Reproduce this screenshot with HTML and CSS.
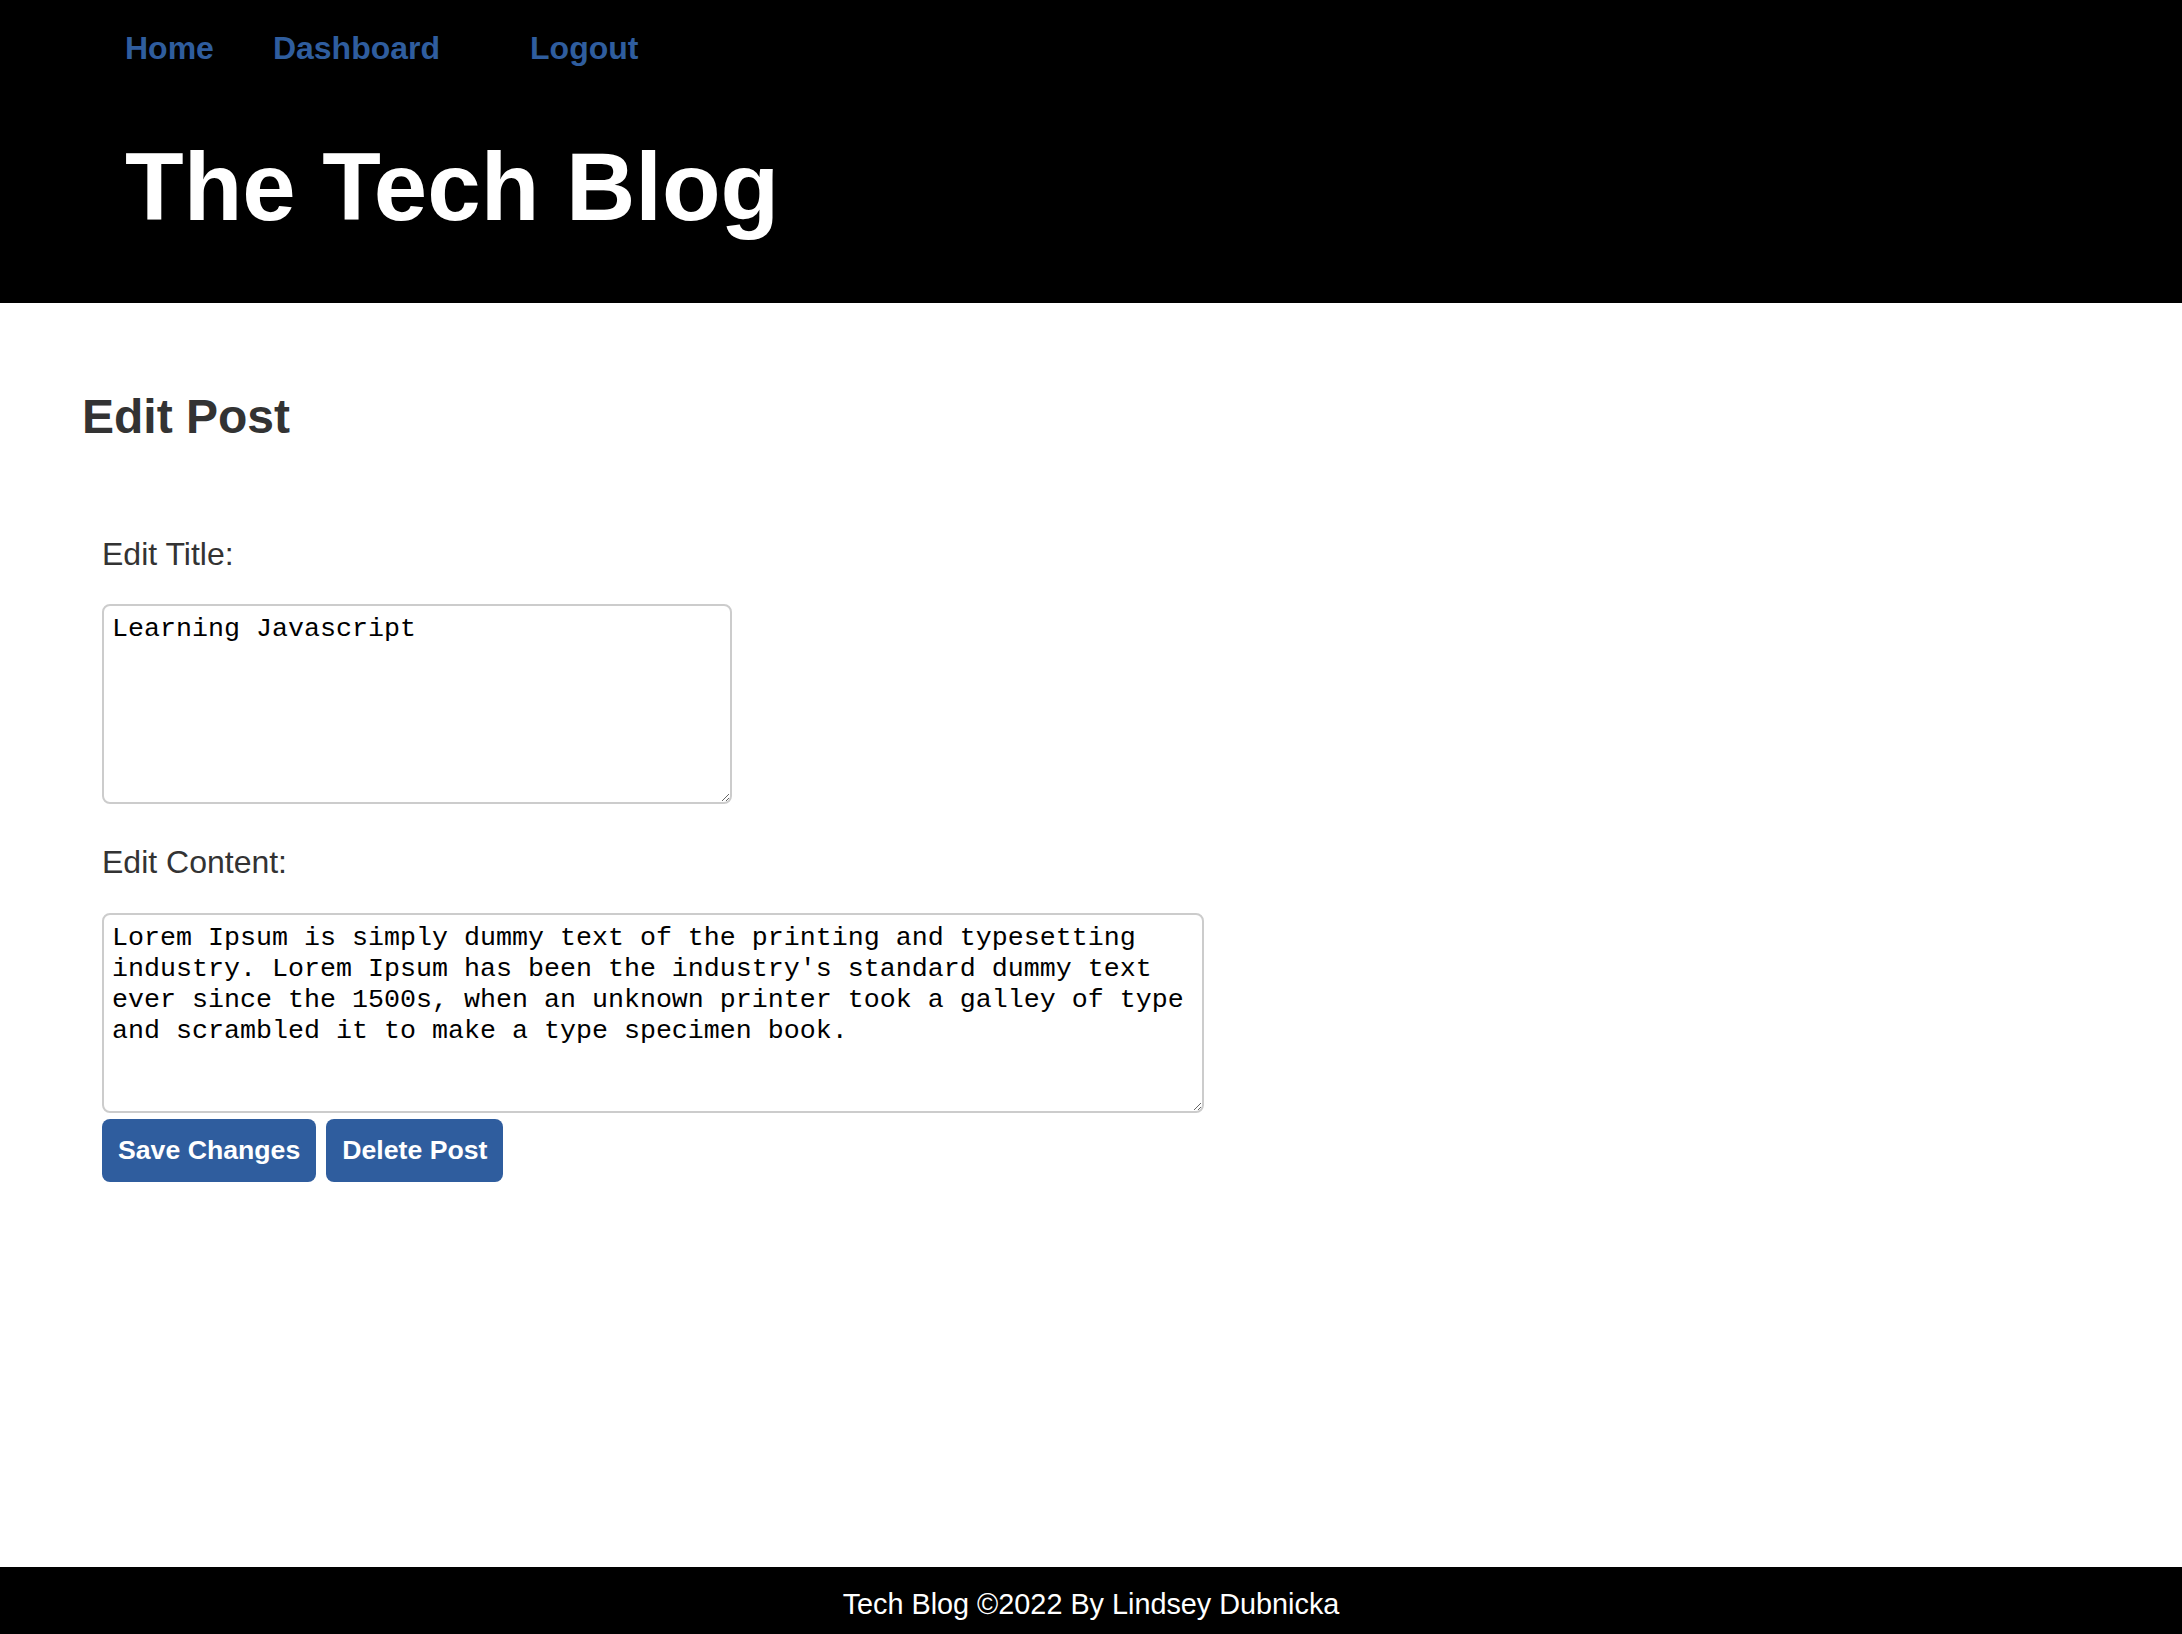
FILE: index.html
```html
<!DOCTYPE html>
<html lang="en">
<head>
<meta charset="utf-8">
<title>The Tech Blog</title>
<link rel="stylesheet" href="styles.css">
</head>
<body>
<header class="site-header">
  <nav class="nav">
    <a class="nav-link nav-home" href="#">Home</a>
    <a class="nav-link nav-dashboard" href="#">Dashboard</a>
    <a class="nav-link" href="#">Logout</a>
  </nav>
  <h1 class="site-title">The Tech Blog</h1>
</header>
<main class="content">
  <h2 class="page-title">Edit Post</h2>
  <form class="edit-form">
    <label class="field-label" for="post-title">Edit Title:</label>
    <textarea class="field title-field" id="post-title">Learning Javascript</textarea>
    <label class="field-label label-content" for="post-content">Edit Content:</label>
    <textarea class="field content-field" id="post-content">Lorem Ipsum is simply dummy text of the printing and typesetting industry. Lorem Ipsum has been the industry's standard dummy text ever since the 1500s, when an unknown printer took a galley of type and scrambled it to make a type specimen book.</textarea>
    <div class="actions">
      <button class="btn" type="button">Save Changes</button>
      <button class="btn" type="button">Delete Post</button>
    </div>
  </form>
</main>
<footer class="site-footer">Tech Blog ©2022 By Lindsey Dubnicka</footer>
</body>
</html>
```
FILE: styles.css
```css
html, body {
  margin: 0;
  padding: 0;
}

body {
  display: flex;
  flex-direction: column;
  min-height: 100vh;
  font-family: "Liberation Sans", Arial, Helvetica, sans-serif;
  background: #fff;
  color: #333;
}

.site-header {
  background: #000;
  padding: 29.5px 0 61.5px 125px;
}

.nav {
  display: flex;
  height: 37px;
  margin-bottom: 65px;
  font-size: 32px;
  line-height: 37px;
  font-weight: bold;
}

.nav-link {
  color: #2f5d9e;
  text-decoration: none;
}

.nav-home {
  margin-right: 59px;
}

.nav-dashboard {
  margin-right: 90px;
}

.site-title {
  margin: 0;
  font-size: 96px;
  line-height: 110px;
  font-weight: bold;
  color: #fff;
}

.content {
  flex: 1;
  padding: 86px 0 0 82px;
}

.page-title {
  margin: 0;
  font-size: 48px;
  line-height: 55px;
  font-weight: bold;
  color: #333;
}

.edit-form {
  display: flex;
  flex-direction: column;
  align-items: flex-start;
  margin: 91.5px 0 0 20px;
}

.field-label {
  font-size: 32px;
  line-height: 37px;
  color: #333;
}

.label-content {
  margin-top: 39.5px;
}

.field {
  box-sizing: border-box;
  margin: 31.5px 0 0 0;
  border: 2px solid #cccccc;
  border-radius: 8px;
  padding: 8px;
  font-family: "Liberation Mono", "Courier New", monospace;
  font-size: 26.67px;
  line-height: 31px;
  color: #000;
  background: #fff;
}

.title-field {
  width: 630px;
  height: 200px;
}

.content-field {
  width: 1102px;
  height: 200px;
  margin-top: 32.5px;
}

.actions {
  display: flex;
  gap: 10px;
  margin-top: 6px;
}

.btn {
  background: #2f5d9e;
  color: #fff;
  border: 0;
  border-radius: 8px;
  padding: 16px;
  font-family: "Liberation Sans", Arial, sans-serif;
  font-size: 26.67px;
  font-weight: bold;
  line-height: normal;
  cursor: pointer;
}

.site-footer {
  background: #000;
  color: #fff;
  text-align: center;
  font-size: 28.8px;
  line-height: 33px;
  padding: 21px 0 13px;
}
```
